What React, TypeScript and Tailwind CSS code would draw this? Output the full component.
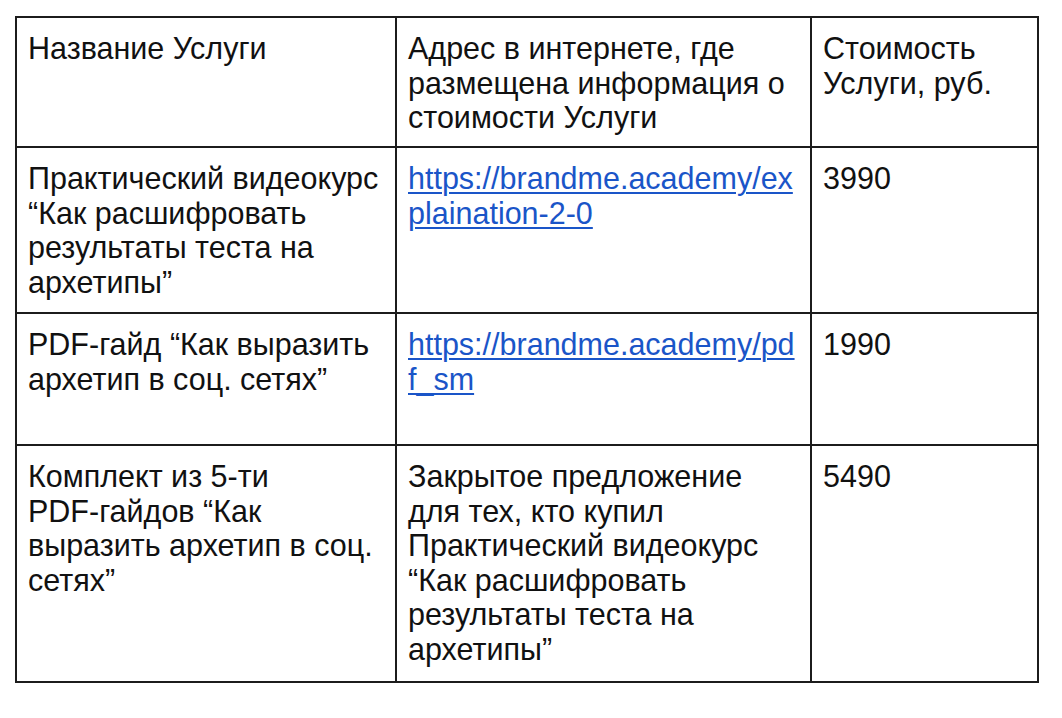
import { Fragment } from "react";

const rows = [
  {
    name: "Название Услуги",
    address: "Адрес в интернете, где размещена информация о стоимости Услуги",
    price: "Стоимость Услуги, руб.",
  },
  {
    name: "Практический видеокурс “Как расшифровать результаты теста на архетипы”",
    link: "https://brandme.academy/explaination-2-0",
    price: "3990",
  },
  {
    name: "PDF-гайд “Как выразить архетип в соц. сетях”",
    link: "https://brandme.academy/pdf_sm",
    price: "1990",
  },
  {
    name: (
      <>
        Комплект из 5-ти <span className="whitespace-nowrap">PDF-гайдов</span> “Как выразить архетип в соц. сетях”
      </>
    ),
    address:
      "Закрытое предложение для тех, кто купил Практический видеокурс “Как расшифровать результаты теста на архетипы”",
    price: "5490",
  },
];

export default function App() {
  return (
    <div className="w-[1062px] h-[718px] bg-white pt-[16px] pl-[15px] font-['Liberation_Sans',Arial,sans-serif] text-[30.5px] leading-[34.5px] text-[#111]">
      <div className="grid grid-cols-[378px_413px_225px] grid-rows-[128px_164px_130px_235px] gap-[2px] p-[2px] bg-[#1c1c1c] w-[1024px]">
        {rows.map((row, i) => (
          <Fragment key={i}>
            <div className="bg-white pl-[11px] pr-[8px] pt-[13px]">{row.name}</div>
            <div className="bg-white pl-[11px] pr-[8px] pt-[13px] break-words">
              {row.link ? (
                <a href={row.link} className="text-[#1a55c8] underline underline-offset-[3px] decoration-[1.5px] break-all">
                  {row.link}
                </a>
              ) : (
                row.address
              )}
            </div>
            <div className="bg-white pl-[11px] pr-[8px] pt-[13px]">{row.price}</div>
          </Fragment>
        ))}
      </div>
    </div>
  );
}
